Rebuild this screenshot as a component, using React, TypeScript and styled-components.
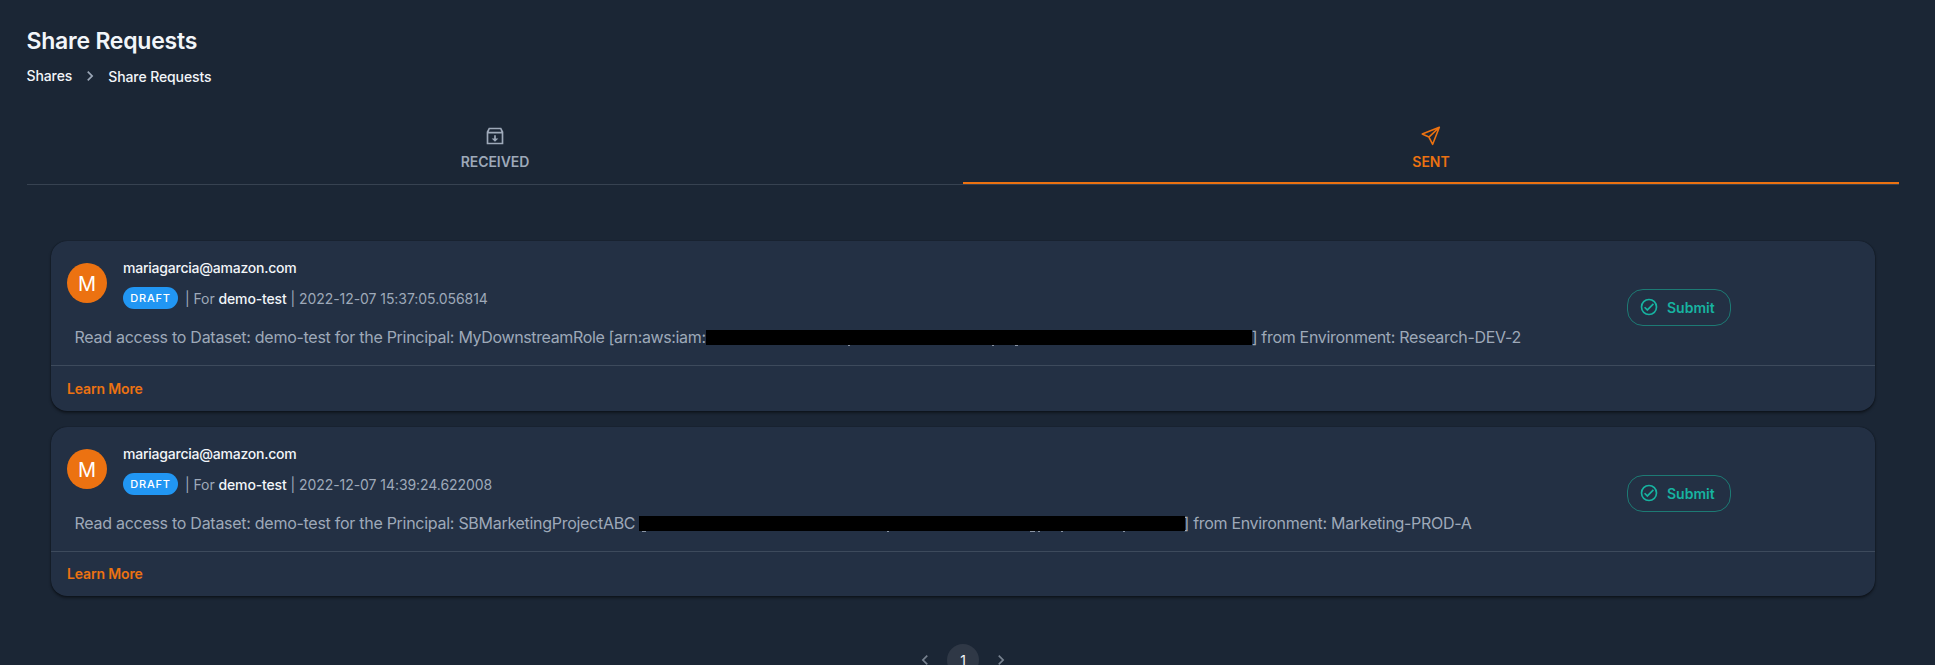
import React from 'react';
import styled, { createGlobalStyle } from 'styled-components';

const GlobalStyle = createGlobalStyle`
  * { box-sizing: border-box; }
  html, body { margin: 0; height: 665px; overflow: hidden; }
  body {
    background: #1b2635;
    color: #f2f5f9;
    font-family: Inter, 'Liberation Sans', sans-serif;
    font-size: 14px;
    line-height: 22px;
  }
`;

const Page = styled.main`
  height: 665px;
  overflow: hidden;
  padding: 26px 36px 0 27px;
`;

const Title = styled.h1`
  margin: 0 0 0 -0.5px;
  font-size: 23px;
  font-weight: 600;
  line-height: 30px;
  letter-spacing: -0.23px;
`;

const Breadcrumbs = styled.nav`
  display: flex;
  align-items: center;
  height: 24px;
  margin-top: 8px;
  margin-left: -0.5px;
  font-weight: 500;
  letter-spacing: -0.1px;
`;

const Crumb = styled.span<{ $drop?: number }>`
  padding-top: ${(p) => p.$drop ?? 0}px;
`;

const CrumbIcon = styled.svg`
  width: 20px;
  height: 20px;
  margin: 0 8px;
  fill: #9aa5b5;
`;

const Tabs = styled.div`
  display: flex;
  height: 72px;
  margin-top: 25px;
  margin-bottom: 56px;
  border-bottom: 1px solid rgba(145, 158, 171, 0.24);
`;

const Tab = styled.button<{ $active?: boolean }>`
  flex: 1;
  display: flex;
  flex-direction: column;
  align-items: center;
  padding: 13px 0 0;
  border: 0;
  border-bottom: 2px solid ${(p) => (p.$active ? '#ec7211' : 'transparent')};
  background: none;
  color: ${(p) => (p.$active ? '#ec7211' : '#9ea9b9')};
  font: 600 14px/18px Inter, sans-serif;
  letter-spacing: -0.05px;
`;

const TabIcon = styled.svg`
  width: 20px;
  height: 20px;
  margin-bottom: 7px;
  fill: currentColor;
`;

const SendIcon = styled(TabIcon)`
  fill: none;
  stroke: currentColor;
  stroke-width: 1.9;
  stroke-linejoin: round;
`;

const Cards = styled.section`
  display: flex;
  flex-direction: column;
  gap: 16px;
  padding: 0 24px;
`;

const Card = styled.article`
  border-radius: 16px;
  background: #233044;
  box-shadow: 0 0 1px rgba(0, 0, 0, 0.7), 0 2px 3px rgba(0, 0, 0, 0.45);
`;

const CardMain = styled.div`
  display: flex;
  height: 124px;
`;

const Info = styled.div`
  flex: none;
  width: 1576px;
  padding: 16px 0 0 16px;
`;

const Person = styled.div`
  display: flex;
  align-items: center;
  height: 52px;
`;

const Avatar = styled.div`
  display: flex;
  align-items: center;
  justify-content: center;
  width: 40px;
  height: 40px;
  border-radius: 50%;
  background: #ec7211;
  color: #fff;
  font-size: 20px;
  padding-top: 2px;
`;

const Details = styled.div`
  margin-left: 16px;
`;

const Name = styled.div`
  height: 30px;
  padding-top: 1px;
  line-height: 20px;
  font-weight: 500;
  letter-spacing: -0.23px;
`;

const Meta = styled.div`
  display: flex;
  align-items: center;
  height: 22px;
  color: #9ea9b9;
  white-space: pre;
  letter-spacing: -0.06px;

  strong {
    color: #f2f5f9;
    font-weight: 500;
    letter-spacing: -0.15px;
  }
`;

const MetaText = styled.span`
  padding-top: 2px;
`;

const Badge = styled.span`
  width: 55px;
  height: 22px;
  margin-right: 7px;
  border-radius: 11px;
  background: #2196f3;
  color: #fff;
  text-align: center;
  font-size: 11px;
  font-weight: 500;
  letter-spacing: 0.75px;
`;

const Description = styled.p`
  display: flex;
  align-items: center;
  height: 24px;
  margin: 16px 0 0 7.5px;
  color: #9ea9b9;
  font-size: 16px;
  letter-spacing: -0.31px;
  white-space: pre;
`;

const Lead = styled.span`
  letter-spacing: -0.275px;
`;

const Principal = styled.span<{ $tracking: number }>`
  letter-spacing: ${(p) => p.$tracking}px;
`;

const Redaction = styled.span<{ $overlap: number }>`
  position: relative;
  width: 546px;
  height: 15px;
  margin-right: ${(p) => -p.$overlap}px;
  background: #000;
`;

/* Tips of descenders that show below the redaction bar. */
const Descender = styled.i<{ $x: number; $w: number }>`
  position: absolute;
  top: 15px;
  left: ${(p) => p.$x}px;
  width: ${(p) => p.$w}px;
  height: 1px;
  background: #8a95a5;
`;

const Action = styled.div`
  display: flex;
  align-items: center;
  padding-top: 9px;
`;

const SubmitButton = styled.button`
  display: flex;
  align-items: center;
  width: 104px;
  height: 37px;
  padding: 0 0 0 11px;
  border: 1px solid #1d7a74;
  border-radius: 16px;
  background: none;
  color: #17b3a1;
  font: 600 14px/20px Inter, sans-serif;

  svg {
    width: 20px;
    height: 20px;
    margin-right: 8px;
    margin-top: -2px;
    fill: currentColor;
  }
`;

const CardFooter = styled.footer`
  height: 46px;
  padding: 12px 16px;
  border-top: 1px solid rgba(145, 158, 171, 0.24);

  ${Card}:last-child & {
    height: 45px;
    padding-top: 11px;
  }
`;

const LearnMore = styled.a`
  color: #ec7211;
  font-weight: 600;
  letter-spacing: -0.15px;
`;

const Pagination = styled.nav`
  display: flex;
  justify-content: center;
  align-items: center;
  gap: 12px;
  margin-top: 48px;

  svg {
    width: 20px;
    height: 20px;
    fill: #77818f;
  }
`;

const PageNumber = styled.span`
  width: 32px;
  height: 32px;
  border-radius: 50%;
  background: #2f3846;
  text-align: center;
  line-height: 34px;
`;

const ChevronRight = 'M10 6 8.59 7.41 13.17 12l-4.58 4.59L10 18l6-6z';
const ChevronLeft = 'M15.41 7.41 14 6l-6 6 6 6 1.41-1.41L10.83 12z';

const requests = [
  {
    principal: 'MyDownstreamRole [arn:aws:iam:',
    time: '2022-12-07 15:37:05.056814',
    environment: 'Research-DEV-2',
    tracking: -0.36,
    overlap: 0,
    descenders: [[142, 2], [286, 2], [309, 3]],
  },
  {
    principal: 'SBMarketingProjectABC ',
    time: '2022-12-07 14:39:24.622008',
    environment: 'Marketing-PROD-A',
    tracking: -0.29,
    overlap: 2,
    descenders: [[3, 4], [248, 2], [391, 5], [399, 2], [422, 2], [484, 2]],
  },
];

export default function App() {
  return (
    <Page>
      <GlobalStyle />
      <Title>Share Requests</Title>
      <Breadcrumbs>
        <Crumb>Shares</Crumb>
        <CrumbIcon viewBox="0 0 24 24"><path d={ChevronRight} /></CrumbIcon>
        <Crumb $drop={2}>Share Requests</Crumb>
      </Breadcrumbs>
      <Tabs>
        <Tab>
          <TabIcon viewBox="0 0 24 24">
            <path fillRule="evenodd" d="M4.5 2h15L22 7v15H2V7zm1.2 2L4.5 7h15l-1.2-3zM4 9v11h16V9zm7 2h2v4h3l-4 4-4-4h3z" />
          </TabIcon>
          RECEIVED
        </Tab>
        <Tab $active>
          <SendIcon viewBox="0 0 24 24">
            <path d="M22 1.5 1.5 9.5l8 3.8L14 22zM22 1.5 9.5 13.3" />
          </SendIcon>
          SENT
        </Tab>
      </Tabs>
      <Cards>
        {requests.map((r) => (
          <Card key={r.time}>
            <CardMain>
              <Info>
                <Person>
                  <Avatar>M</Avatar>
                  <Details>
                    <Name>mariagarcia@amazon.com</Name>
                    <Meta>
                      <Badge>DRAFT</Badge>
                      <MetaText>| For <strong>demo-test</strong> | {r.time}</MetaText>
                    </Meta>
                  </Details>
                </Person>
                <Description>
                  <Lead>Read access to Dataset: demo-test for the Principal: </Lead>
                  <Principal $tracking={r.tracking}>{r.principal}</Principal>
                  <Redaction $overlap={r.overlap}>
                    {r.descenders.map(([x, w]) => <Descender key={x} $x={x} $w={w} />)}
                  </Redaction>
                  <span>] from Environment: {r.environment}</span>
                </Description>
              </Info>
              <Action>
                <SubmitButton>
                  <svg viewBox="0 0 24 24">
                    <path d="M12 2a10 10 0 1 0 0 20 10 10 0 0 0 0-20m0 18a8 8 0 1 1 0-16 8 8 0 0 1 0 16m4.6-12.4L10 14.2l-2.6-2.6L6 13l4 4 8-8z" />
                  </svg>
                  Submit
                </SubmitButton>
              </Action>
            </CardMain>
            <CardFooter><LearnMore>Learn More</LearnMore></CardFooter>
          </Card>
        ))}
      </Cards>
      <Pagination>
        <svg viewBox="0 0 24 24"><path d={ChevronLeft} /></svg>
        <PageNumber>1</PageNumber>
        <svg viewBox="0 0 24 24"><path d={ChevronRight} /></svg>
      </Pagination>
    </Page>
  );
}
